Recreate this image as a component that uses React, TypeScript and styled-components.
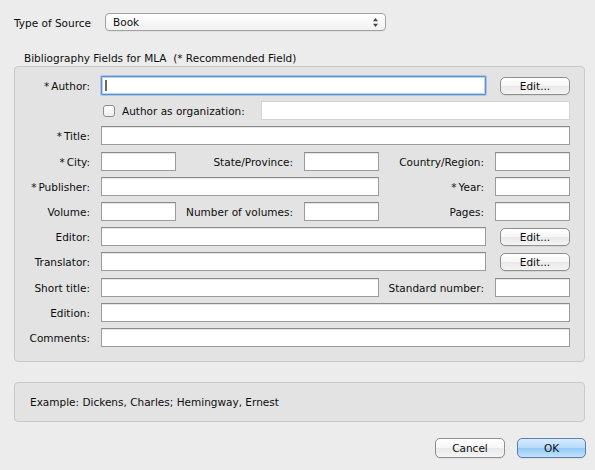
import React from 'react';
import styled, { createGlobalStyle, css } from 'styled-components';

const GlobalStyle = createGlobalStyle`
  html, body {
    margin: 0;
    padding: 0;
    background: #ececec;
  }
  * {
    box-sizing: border-box;
  }
  body {
    font-family: "DejaVu Sans", "Noto Sans", sans-serif;
    font-size: 10.5px;
    color: #0d0d0d;
  }
`;

const Window = styled.div`
  width: 595px;
  height: 470px;
  padding: 13px 10px 0 14px;
  background: #ececec;
`;

const SourceRow = styled.div`
  display: flex;
  align-items: center;
  height: 18px;
`;

const SourceLabel = styled.span`
  width: 91px;
  padding-top: 1px;
`;

const Select = styled.div`
  position: relative;
  width: 281px;
  height: 18px;
  display: flex;
  align-items: center;
  padding-left: 7px;
  border: 1px solid #a2a2a2;
  border-radius: 4px;
  background: linear-gradient(#ffffff, #f1f1f1);
  box-shadow: 0 1px 0 rgba(0, 0, 0, 0.04);
`;

const Arrows = styled.svg`
  margin-left: auto;
  margin-right: 7px;
`;

const GroupTitle = styled.div`
  margin-top: 21px;
  padding-left: 10px;
  line-height: 13px;
  margin-bottom: 1px;
`;

const Panel = styled.div`
  border: 1px solid #c9c9c9;
  border-radius: 4px;
  background: #e3e3e3;
`;

const FieldGrid = styled(Panel)`
  display: grid;
  grid-template-columns: 75px 1fr;
  column-gap: 11px;
  row-gap: 6.2px;
  padding: 9px 14px 14px 0;
`;

const Label = styled.label<{ $pad?: boolean }>`
  display: flex;
  align-items: center;
  justify-content: flex-end;
  height: 19px;
  padding-top: 1px;
  white-space: nowrap;
  ${({ $pad }) =>
    $pad &&
    css`
      padding-right: 11px;
    `}
`;

const Star = styled.span`
  margin-right: 2px;
`;

const Input = styled.div<{ $disabled?: boolean; $focused?: boolean }>`
  position: relative;
  height: 19px;
  min-width: 0;
  background: #fff;
  border: 1px solid #9c9c9c;
  border-top-color: #8a8a8a;
  box-shadow: inset 0 1px 0 #e6e6e6;
  ${({ $disabled }) =>
    $disabled &&
    css`
      border-color: #d4d4d4;
      box-shadow: none;
    `}
  ${({ $focused }) =>
    $focused &&
    css`
      border: 1px solid #5f8fcc;
      box-shadow: 0 0 0 1px #a6c4ec, inset 0 0 0 1px #b9d1f0;
      border-radius: 1px;
    `}
`;

const Caret = styled.span`
  position: absolute;
  left: 3px;
  top: 3px;
  width: 2px;
  height: 11px;
  background: #6a6a6a;
`;

const Button = styled.button<{ $default?: boolean; $w?: number; $h?: number }>`
  width: ${({ $w }) => $w ?? 70}px;
  height: ${({ $h }) => $h ?? 18}px;
  padding: 1px 0 0;
  font-family: inherit;
  font-size: 10.5px;
  color: #0d0d0d;
  border: 1px solid #8f8f8f;
  border-radius: 5px;
  background: linear-gradient(#ffffff 0%, #f6f6f6 50%, #e9e9e9 51%, #f4f4f4 100%);
  box-shadow: 0 1px 0 rgba(0, 0, 0, 0.06);
  ${({ $default }) =>
    $default &&
    css`
      border-color: #5a7fb4;
      background: linear-gradient(#d9ecfc 0%, #b5dafa 50%, #93c8f6 51%, #c3e3fd 100%);
    `}
`;

const EditLine = styled.div`
  display: grid;
  grid-template-columns: 1fr 70px;
  column-gap: 14px;
  align-items: center;
`;

const TripleLine = styled.div`
  display: grid;
  grid-template-columns: 75px 128px 75px 116px 75px;
`;

const Wide = styled(Input)`
  grid-column: span 3;
`;

const OrgLine = styled.div`
  display: flex;
  align-items: center;
  height: 19px;
`;

const CheckBox = styled.span`
  width: 12px;
  height: 12px;
  margin: 0 7px 0 2px;
  border: 1px solid #8e8e8e;
  border-radius: 3px;
  background: linear-gradient(#ffffff, #ededed);
`;

const OrgText = styled.span`
  padding-top: 1px;
`;

const OrgInput = styled(Input)`
  flex: 1;
  margin-left: 16px;
`;

const ExampleBox = styled(Panel)`
  margin-top: 20px;
  height: 40px;
  display: flex;
  align-items: center;
  padding: 1px 0 0 15px;
`;

const Footer = styled.div`
  display: flex;
  justify-content: flex-end;
  gap: 12px;
  margin-top: 16px;
  margin-right: -1px;
`;

const Req = ({ children }: { children: React.ReactNode }) => (
  <>
    <Star>*</Star>
    {children}
  </>
);

const App = () => {
  return (
    <Window>
      <GlobalStyle />
      <SourceRow>
        <SourceLabel>Type of Source</SourceLabel>
        <Select>
          Book
          <Arrows width="5" height="9" viewBox="0 0 5 9">
            <path d="M2.5 0 L5 3.3 L0 3.3 Z" fill="#444" />
            <path d="M2.5 9 L5 5.7 L0 5.7 Z" fill="#444" />
          </Arrows>
        </Select>
      </SourceRow>

      <GroupTitle>Bibliography Fields for MLA&nbsp; (* Recommended Field)</GroupTitle>
      <FieldGrid>
        <Label>
          <Req>Author:</Req>
        </Label>
        <EditLine>
          <Input $focused>
            <Caret />
          </Input>
          <Button>Edit...</Button>
        </EditLine>

        <span />
        <OrgLine>
          <CheckBox />
          <OrgText>Author as organization:</OrgText>
          <OrgInput $disabled />
        </OrgLine>

        <Label>
          <Req>Title:</Req>
        </Label>
        <Input />

        <Label>
          <Req>City:</Req>
        </Label>
        <TripleLine>
          <Input />
          <Label $pad>State/Province:</Label>
          <Input />
          <Label $pad>Country/Region:</Label>
          <Input />
        </TripleLine>

        <Label>
          <Req>Publisher:</Req>
        </Label>
        <TripleLine>
          <Wide />
          <Label $pad>
            <Req>Year:</Req>
          </Label>
          <Input />
        </TripleLine>

        <Label>Volume:</Label>
        <TripleLine>
          <Input />
          <Label $pad>Number of volumes:</Label>
          <Input />
          <Label $pad>Pages:</Label>
          <Input />
        </TripleLine>

        <Label>Editor:</Label>
        <EditLine>
          <Input />
          <Button>Edit...</Button>
        </EditLine>

        <Label>Translator:</Label>
        <EditLine>
          <Input />
          <Button>Edit...</Button>
        </EditLine>

        <Label>Short title:</Label>
        <TripleLine>
          <Wide />
          <Label $pad>Standard number:</Label>
          <Input />
        </TripleLine>

        <Label>Edition:</Label>
        <Input />

        <Label>Comments:</Label>
        <Input />
      </FieldGrid>

      <ExampleBox>Example: Dickens, Charles; Hemingway, Ernest</ExampleBox>

      <Footer>
        <Button $h={20}>Cancel</Button>
        <Button $default $h={20} $w={69}>
          OK
        </Button>
      </Footer>
    </Window>
  );
};

export default App;
